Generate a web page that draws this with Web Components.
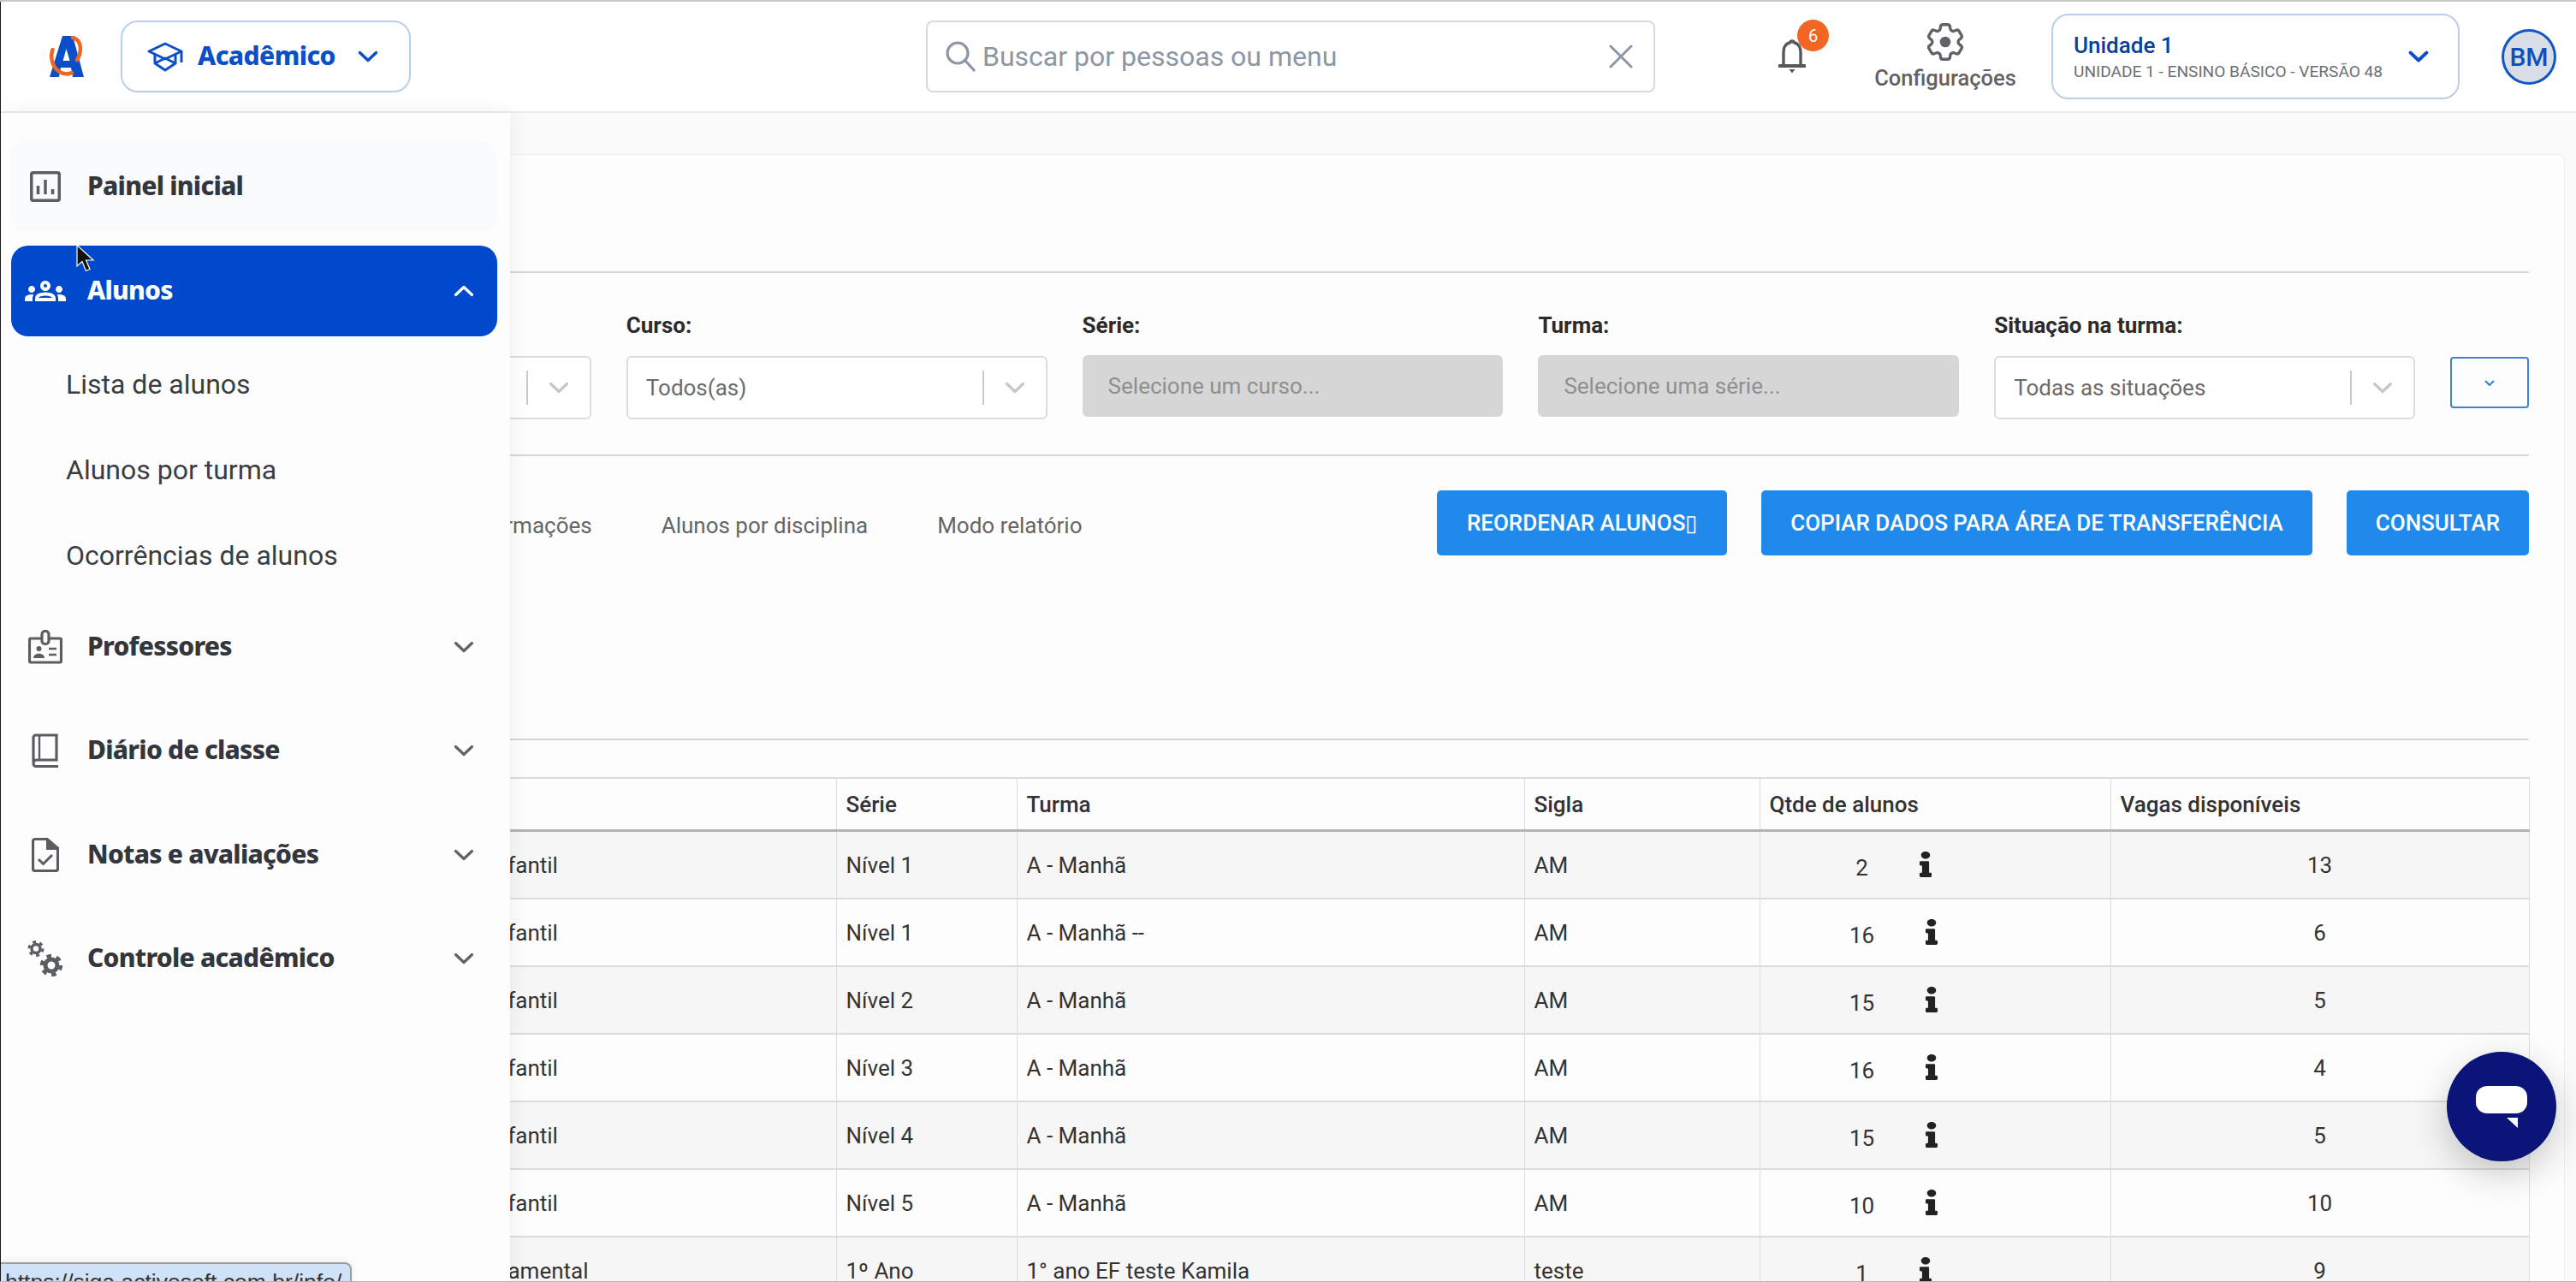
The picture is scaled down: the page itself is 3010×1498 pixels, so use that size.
<!DOCTYPE html>
<html lang="pt-BR"><head><meta charset="utf-8"><title>Alunos por turma</title>
<style>
html,body{margin:0;padding:0;width:3010px;height:1498px;overflow:hidden;background:#fafafa;font-family:Roboto,"Liberation Sans",sans-serif}
</style></head><body>
<app-shell>
  <top-bar></top-bar>
  <page-content></page-content>
  <side-nav>
    <nav-item soft><svg slot="icon" width="36" height="36" viewBox="0 0 36 36" fill="none" stroke="#5a5e63" stroke-width="3.500"><rect x="1.750" y="1.750" width="32.500" height="32.500" rx="2"/><path d="M9.500 27V17M18 27V10M26.500 27v-6"/></svg>Painel inicial</nav-item>
    <nav-item active chevron="up"><svg slot="icon" width="48" height="24" viewBox="0 6 24 12" fill="#fff"><path d="M4,13c1.1,0,2-0.9,2-2c0-1.1-0.9-2-2-2s-2,0.9-2,2C2,12.1,2.9,13,4,13z M5.13,14.1C4.76,14.04,4.39,14,4,14c-0.99,0-1.93,0.21-2.78,0.58C0.48,14.9,0,15.62,0,16.43V18l4.5,0v-1.61C4.5,15.56,4.73,14.78,5.13,14.1z M20,13c1.1,0,2-0.9,2-2c0-1.1-0.9-2-2-2s-2,0.9-2,2C18,12.1,18.9,13,20,13z M24,16.43c0-0.81-0.48-1.53-1.22-1.85C21.93,14.21,20.99,14,20,14c-0.39,0-0.76,0.04-1.13,0.1c0.4,0.68,0.63,1.46,0.63,2.29V18l4.5,0V16.43z M16.24,13.65c-1.17-0.52-2.61-0.9-4.24-0.9c-1.63,0-3.07,0.39-4.24,0.9C6.68,14.13,6,15.21,6,16.39V18h12v-1.61C18,15.21,17.32,14.13,16.24,13.65z M8.07,16c0.09-0.23,0.13-0.39,0.91-0.69c0.97-0.38,1.99-0.56,3.02-0.56s2.05,0.18,3.02,0.56c0.77,0.3,0.81,0.46,0.91,0.69H8.07z M12,8c0.55,0,1,0.45,1,1s-0.45,1-1,1s-1-0.45-1-1S11.45,8,12,8 M12,6c-1.66,0-3,1.34-3,3c0,1.66,1.34,3,3,3s3-1.34,3-3C15,7.34,13.66,6,12,6L12,6z"/></svg>Alunos</nav-item>
    <nav-sub>Lista de alunos</nav-sub>
    <nav-sub>Alunos por turma</nav-sub>
    <nav-sub>Ocorrências de alunos</nav-sub>
    <nav-item gap chevron="down"><svg slot="icon" width="40" height="40" viewBox="0 0 40 40" fill="none" stroke="#5a5e63" stroke-width="3.200"><path d="M15 10H3a1.500 1.500 0 0 0-1.500 1.500v25A1.500 1.500 0 0 0 3 38h34a1.500 1.500 0 0 0 1.500-1.500v-25A1.500 1.500 0 0 0 37 10H25"/><rect x="16" y="1.500" width="8" height="15" rx="3.500"/><circle cx="12.500" cy="22" r="3" fill="#5a5e63" stroke="none"/><path d="M6 33c0-7 13-7 13 0z" fill="#5a5e63" stroke="none"/><path d="M24 22h9M24 29h9" stroke-width="2.600"/></svg>Professores</nav-item>
    <nav-item chevron="down"><svg slot="icon" width="32" height="40" viewBox="0 0 32 40" fill="none" stroke="#5a5e63" stroke-width="3.200"><path d="M2 33V5a3 3 0 0 1 3-3h24v29H6a4 4 0 0 0-4 3.500A3.500 3.500 0 0 0 6 38.500h25"/><path d="M9 2v29" stroke-width="2.400"/></svg>Diário de classe</nav-item>
    <nav-item chevron="down"><svg slot="icon" width="32" height="40" viewBox="0 0 32 40" fill="none" stroke="#5a5e63" stroke-width="3.200"><path d="M18 1.500H4A2.500 2.500 0 0 0 1.500 4v32A2.500 2.500 0 0 0 4 38.500h24a2.500 2.500 0 0 0 2.500-2.500V12z"/><path d="M18 1.500 30.500 13H18z" fill="#5a5e63" stroke-width="2"/><path d="M8 25l5.500 5.500L24 20" stroke-width="3"/></svg>Notas e avaliações</nav-item>
    <nav-item chevron="down"><svg slot="icon" width="42" height="42" viewBox="0 0 42 42" fill="none" stroke="#5a5e63"><circle cx="10" cy="9.500" r="5" stroke-width="3.500"/><circle cx="10" cy="9.500" r="8" stroke-width="3" stroke-dasharray="4 4.380"/><circle cx="28" cy="29" r="7" stroke-width="5"/><circle cx="28" cy="29" r="11" stroke-width="4.500" stroke-dasharray="5.500 6"/></svg>Controle acadêmico</nav-item>
  </side-nav>
  <mouse-cursor></mouse-cursor>
  <chat-fab></chat-fab>
  <status-tip>https://siga.activesoft.com.br/info/</status-tip>
</app-shell>
<script>
function def(name,css,html,init){
  customElements.define(name,class extends HTMLElement{
    constructor(){super();const r=this.attachShadow({mode:'open'});r.innerHTML='<style>'+css+'</style>'+html;if(init)init(r);}
  });
}
const NUN='"Noto Sans",Lato,sans-serif';
const ROB='Roboto,"Liberation Sans",sans-serif';
const chev=(c,w)=>`<svg style="display:block" width="24" height="14" viewBox="0 0 24 14" fill="none" stroke="${c}" stroke-width="${w}" stroke-linecap="round" stroke-linejoin="round"><path d="M2.500 2.500 12 11.500l9.500-9"/></svg>`;

def('app-shell',`:host{display:block;position:relative;width:3010px;height:1498px;overflow:hidden;background:#fafafa;color:#333}
  .edge{position:absolute;z-index:20;pointer-events:none}
  .l{left:0;top:0;bottom:0;width:1px;background:#1a1a1a}.t{left:0;right:0;top:0;height:2px;background:#c8c8c8}.b{left:0;right:0;bottom:0;height:1px;background:#b5b5b5}`,
  `<slot></slot><div class="edge l"></div><div class="edge t"></div><div class="edge b"></div>`);

def('top-bar',`:host{display:flex;align-items:center;height:132px;box-sizing:border-box;padding:2px 0 0 58px;background:#fff;border-bottom:2px solid #e9ebef;font-family:${ROB}}
  .logo{display:block;flex:none}
  .area{flex:none;margin-left:43px;width:339px;height:84px;box-sizing:border-box;border:2px solid #b9cfe9;border-radius:20px;display:flex;align-items:center;padding-left:29px;color:#0b4fc8;font:800 30px ${NUN}}
  .area span{margin-left:17px;letter-spacing:-.6px;padding-bottom:3px}.area .c{margin-left:26px}
  .search{flex:none;margin-left:602px;width:852px;height:84px;box-sizing:border-box;border:2px solid #d6dbe3;border-radius:8px;display:flex;align-items:center;padding:0 24px 0 20px;color:#8d96a5;font-size:32px}
  .search span{margin-left:8px;flex:1}
  .bell{flex:none;margin-left:144px;position:relative;width:32px;height:40px}
  .badge{position:absolute;left:22px;top:-23px;width:37px;height:37px;border-radius:50%;background:#f26522;color:#fff;font-size:20px;display:flex;align-items:center;justify-content:center}
  .cfg{flex:none;margin-left:80px;width:166px;display:flex;flex-direction:column;align-items:center;gap:7px;color:#5f6368;font-size:25.500px;font-weight:500;line-height:30px;white-space:nowrap;padding-top:2px}
  .unit{flex:none;margin-left:42px;width:477px;height:100px;box-sizing:border-box;border:2px solid #b9cfe9;border-radius:20px;padding:0 34px 0 24px;display:flex;align-items:center;justify-content:space-between;margin-right:-1px;position:relative;left:-1px}
  .txt{padding-top:4px}
  .u1{color:#0a3f9e;font-size:26px;font-weight:500;line-height:30px}.u2{color:#6b7076;font-size:19.100px;line-height:30px;white-space:nowrap;margin-top:1px}
  .av{flex:none;margin-left:50px;width:64px;height:65px;box-sizing:border-box;border:3px solid #1056c4;border-radius:50%;background:#d9dee6;color:#0d50be;font-size:30px;font-weight:500;display:flex;align-items:center;justify-content:center;position:relative;left:-1px}`,
`<svg class="logo" width="40" height="48" viewBox="0 0 40 48"><path fill="#0b4fc8" fill-rule="evenodd" d="M15 0h12l13 48H27l-2-11H13l-2 11H0zM19.500 15l-4 14h8z"/><g fill="none" stroke="#f0651f" stroke-width="4.500" stroke-linecap="round"><path d="M3.500 16C0 26 4 38 12 42c4 3 10 3 14 1"/><path d="M27 2c9 2 12 14 5 26"/></g></svg>
<div class="area"><svg width="42" height="35" viewBox="0 0 42 35" fill="none" stroke="#0b4fc8" stroke-width="3" stroke-linejoin="round"><path d="M21 2 40 11 21 20 2 11z"/><path d="M9 15v10l12 8 12-8V15"/><path d="M40 11v13"/><path d="M9 25l12-6 12 6"/></svg><span>Acadêmico</span><div class="c">${chev('#0b4fc8',3.5)}</div></div>
<div class="search"><svg width="36" height="36" viewBox="0 0 36 36" fill="none" stroke="#8d96a5" stroke-width="3.200" stroke-linecap="round"><circle cx="15" cy="14" r="12"/><path d="M24 23 34 34"/></svg><span>Buscar por pessoas ou menu</span><svg width="28" height="28" viewBox="0 0 28 28" stroke="#8d96a5" stroke-width="3" stroke-linecap="round"><path d="M2 2l24 24M26 2 2 26"/></svg></div>
<div class="bell"><svg width="32" height="40" viewBox="0 0 32 40" fill="none" stroke="#55595e" stroke-width="3.400"><path d="M6 30V15C6 8 10 4.500 14 3.500c0-2 4-2 4 0C22 4.500 26 8 26 15v15"/><path d="M1 31h30" stroke-width="3.800" stroke-linecap="round"/><path d="M12.500 35h7l-3.500 4.500z" fill="#55595e" stroke="none"/></svg><div class="badge">6</div></div>
<div class="cfg"><svg width="54" height="54" viewBox="0 0 24 24" fill="none" stroke="#5f6368" stroke-width="1.500" stroke-linejoin="round" style="margin:-7px 0"><path d="M9.594 3.940c.09-.542.56-.94 1.110-.94h2.593c.55 0 1.020.398 1.110.94l.213 1.281c.063.374.313.686.645.870.074.040.147.083.22.127.325.196.72.257 1.075.124l1.217-.456a1.125 1.125 0 0 1 1.370.49l1.296 2.247a1.125 1.125 0 0 1-.26 1.431l-1.003.827c-.293.241-.438.613-.43.992a7.723 7.723 0 0 1 0 .255c-.008.378.137.75.43.991l1.004.827c.424.35.534.955.26 1.430l-1.298 2.247a1.125 1.125 0 0 1-1.369.491l-1.217-.456c-.355-.133-.75-.072-1.076.124a6.470 6.470 0 0 1-.22.128c-.331.183-.581.495-.644.869l-.213 1.281c-.09.543-.56.94-1.110.94h-2.594c-.55 0-1.019-.398-1.110-.94l-.213-1.281c-.062-.374-.312-.686-.644-.87a6.520 6.520 0 0 1-.22-.127c-.325-.196-.72-.257-1.076-.124l-1.217.456a1.125 1.125 0 0 1-1.369-.49l-1.297-2.247a1.125 1.125 0 0 1 .26-1.431l1.004-.827c.292-.24.437-.613.43-.991a6.932 6.932 0 0 1 0-.255c.007-.38-.138-.751-.43-.992l-1.004-.827a1.125 1.125 0 0 1-.26-1.430l1.297-2.247a1.125 1.125 0 0 1 1.370-.491l1.216.456c.356.133.751.072 1.076-.124.072-.044.146-.086.22-.128.332-.183.582-.495.644-.869l.214-1.280Z"/><circle cx="12" cy="12" r="2.800" fill="#5f6368" stroke="none"/></svg><span>Configurações</span></div>
<div class="unit"><div class="txt"><div class="u1">Unidade 1</div><div class="u2">UNIDADE 1 - ENSINO BÁSICO - VERSÃO 48</div></div>${chev('#0b4fc8',3.8)}</div>
<div class="av">BM</div>`);

def('nav-item',`:host{display:flex;align-items:center;position:relative;box-sizing:border-box;width:568px;height:106px;margin:0 0 15.600px 13px;border-radius:20px;color:#33373d;font:800 30px ${NUN};letter-spacing:-.75px}
  :host([soft]){background:#f9fafb}:host([active]){background:#0049cc;color:#fff}
  :host([gap]){margin-top:4px}
  .i{position:absolute;left:0;width:80px;display:flex;justify-content:center;top:0;bottom:0;align-items:center}
  .t{margin-left:89px;padding-bottom:3px}.c{position:absolute;right:27px;top:0;bottom:0;display:flex;align-items:center;color:#5f6368}
  :host(:not([chevron])) .c{display:none}
  :host([active]) .c{transform:scaleY(-1);color:#fff}`,
  `<div class="i"><slot name="icon"></slot></div><div class="t"><slot></slot></div><div class="c">${chev('currentColor',3.2)}</div>`
);
def('nav-sub',`:host{display:flex;align-items:center;height:100px;padding-left:77px;color:#3a3d42;font:400 32px ${ROB}}`,`<slot></slot>`);
def('side-nav',`:host{display:block;position:absolute;left:0;top:132px;bottom:0;width:596px;box-sizing:border-box;padding-top:33px;background:#fdfdfd;box-shadow:0 0 22px rgba(0,0,0,.07);z-index:5}
  ::slotted(nav-sub:first-of-type){margin-top:-9.600px}`,`<slot></slot>`);

def('filter-field',`:host{display:block;min-width:0;font-family:${ROB}}
  .l{height:30px;line-height:30px;font-size:26px;font-weight:700;color:#2b2b2b;white-space:nowrap}
  .b{margin-top:21px;height:74px;box-sizing:border-box;border:2px solid #dcdcdc;border-radius:6px;background:#fff;display:flex;align-items:center;padding-left:21px;color:#6b6b6b;font-size:26px}
  .v{flex:1;white-space:nowrap}.s{width:2px;height:40px;background:#c9c9c9}.c{width:72px;display:flex;justify-content:center}
  :host([disabled]) .b{height:72px;margin-top:20px;border:0;background:#d6d6d6;color:#8f8f8f;padding-left:30px}
  :host([disabled]) .s,:host([disabled]) .c{display:none}`,
  `<div class="l"><slot name="label"></slot></div><div class="b"><div class="v"><slot></slot></div><div class="s"></div><div class="c">${chev('#c6c6c6',3.2)}</div></div>`);

def('action-btn',`:host{display:flex;align-items:center;justify-content:center;height:76px;box-sizing:border-box;padding:0 34px;background:#2089ec;border-radius:5px;color:#fff;font:500 26px ${ROB};white-space:nowrap}`,`<slot></slot>`);

def('class-table',`:host{display:block;font-family:${ROB};font-size:26px;color:#333}
  table{border-collapse:collapse;table-layout:fixed;width:2754px}
  th,td{border:1px solid #dcdcdc;border-bottom-width:2px;padding:0 0 0 11px;text-align:left;white-space:nowrap}
  th{height:59px;font-weight:500;border-top-width:2px;border-bottom:3px solid #b4b4b4;background:#fdfdfd}
  td{height:77px;background:#fdfdfd}
  tr:nth-child(odd) td{background:#f6f6f6}
  .first{border-left:0}.c{text-align:center;padding:0}
  .q{display:flex;justify-content:center;align-items:center;gap:60px;padding-right:108px}
  .q span{position:relative;top:3px}
  svg{display:block;position:relative;top:-1px}`,`<table><colgroup><col style="width:239px"><col style="width:537px"><col style="width:211px"><col style="width:593px"><col style="width:275px"><col style="width:410px"><col style="width:489px"></colgroup><thead><tr><th class="first"></th><th></th><th>Série</th><th>Turma</th><th>Sigla</th><th>Qtde de alunos</th><th>Vagas disponíveis</th></tr></thead><tbody></tbody></table>`,
  r=>{
    const info='<svg width="14" height="30" viewBox="0 0 192 512" preserveAspectRatio="none" fill="#222"><path d="M20 424.229h20V279.771H20c-11.046 0-20-8.954-20-20V212c0-11.046 8.954-20 20-20h112c11.046 0 20 8.954 20 20v212.229h20c11.046 0 20 8.954 20 20V492c0 11.046-8.954 20-20 20H20c-11.046 0-20-8.954-20-20v-47.771c0-11.046 8.954-20 20-20zM96 0C56.235 0 24 32.235 24 72s32.235 72 72 72 72-32.235 72-72S135.764 0 96 0z"/></svg>';
    const rows=[['Educação Infantil','Nível 1','A - Manhã','AM',2,13],['Educação Infantil','Nível 1','A - Manhã --','AM',16,6],['Educação Infantil','Nível 2','A - Manhã','AM',15,5],['Educação Infantil','Nível 3','A - Manhã','AM',16,4],['Educação Infantil','Nível 4','A - Manhã','AM',15,5],['Educação Infantil','Nível 5','A - Manhã','AM',10,10],['Ensino Fundamental','1º Ano','1° ano EF teste Kamila','teste',1,9]];
    r.querySelector('tbody').innerHTML=rows.map(x=>`<tr><td class="first"></td><td>${x[0]}</td><td>${x[1]}</td><td>${x[2]}</td><td>${x[3]}</td><td><div class="q"><span>${x[4]}</span>${info}</div></td><td class="c">${x[5]}</td></tr>`).join('');
  });

def('page-content',`:host{display:block;padding:48px 13px 0 159px;font-family:${ROB}}
  .card{background:#fdfdfd;border:1px solid #eeeeee;border-radius:8px;padding:0 41px;height:1400px;box-sizing:border-box}
  hr{border:0;height:2px;background:#d6d6d6;margin:0}
  .h1{margin-top:136px}
  .f{display:grid;grid-template-columns:repeat(5,1fr) 92px;column-gap:41px;padding:46px 0 41px;margin-left:-2px}
  .mini{align-self:start;margin-top:52px;height:60px;box-sizing:border-box;border:2px solid #3f84d2;border-radius:4px;display:flex;align-items:center;justify-content:center}
  .acts{display:flex;align-items:center;padding:40px 0 214px 344px}
  .tab{color:#666;font-size:26px;margin-right:81px;white-space:nowrap;position:relative;top:3px}
  .btns{margin-left:auto;display:flex;gap:40px}
  .w{width:339px;padding:0}
  class-table{margin-top:43px}`,
`<div class="card"><hr class="h1">
<div class="f"><filter-field></filter-field><filter-field><span slot="label">Curso:</span>Todos(as)</filter-field><filter-field disabled><span slot="label">Série:</span>Selecione um curso...</filter-field><filter-field disabled><span slot="label">Turma:</span>Selecione uma série...</filter-field><filter-field><span slot="label">Situação na turma:</span>Todas as situações</filter-field><div class="mini"><svg width="12" height="7" viewBox="0 0 12 7" fill="none" stroke="#2f7fd6" stroke-width="2"><path d="M1 1l5 5 5-5"/></svg></div></div>
<hr>
<div class="acts"><span class="tab">Informações</span><span class="tab">Alunos por disciplina</span><span class="tab">Modo relatório</span><div class="btns"><action-btn class="w">REORDENAR ALUNOS▯</action-btn><action-btn>COPIAR DADOS PARA ÁREA DE TRANSFERÊNCIA</action-btn><action-btn>CONSULTAR</action-btn></div></div>
<hr>
<class-table></class-table></div>`);

def('mouse-cursor',`:host{display:block;position:absolute;left:89px;top:286px;width:22px;height:32px;z-index:10}`,
 `<svg width="22" height="32" viewBox="0 0 22 32"><path d="M1 0.500V25l6-5.500L11.500 30.500l4.500-2-4.500-10.500H20z" fill="#111" stroke="#fff" stroke-width="1.200"/></svg>`);
def('chat-fab',`:host{display:flex;align-items:center;justify-content:center;position:absolute;left:2859px;top:1229px;width:128px;height:128px;border-radius:50%;background:#0b1478;box-shadow:0 14px 44px rgba(0,0,0,.22);z-index:10}`,
 `<svg width="60" height="50" viewBox="0 0 60 50" style="margin-top:1px"><rect width="60" height="32" rx="13" fill="#fff"/><path d="M36 37h13v12z" fill="#fff"/></svg>`);
def('status-tip',`:host{display:block;position:absolute;left:0;top:1475px;width:411px;height:40px;box-sizing:border-box;background:#cfe2f8;border:2px solid #9c9c9c;border-left:0;border-radius:0 8px 0 0;padding:4px 0 0 6px;font:26.500px/34px "Liberation Sans",Arial,sans-serif;color:#333;white-space:nowrap;z-index:12;box-shadow:0 -2px 8px rgba(0,0,0,.08)}`,`<slot></slot>`);
</script>
</body></html>
